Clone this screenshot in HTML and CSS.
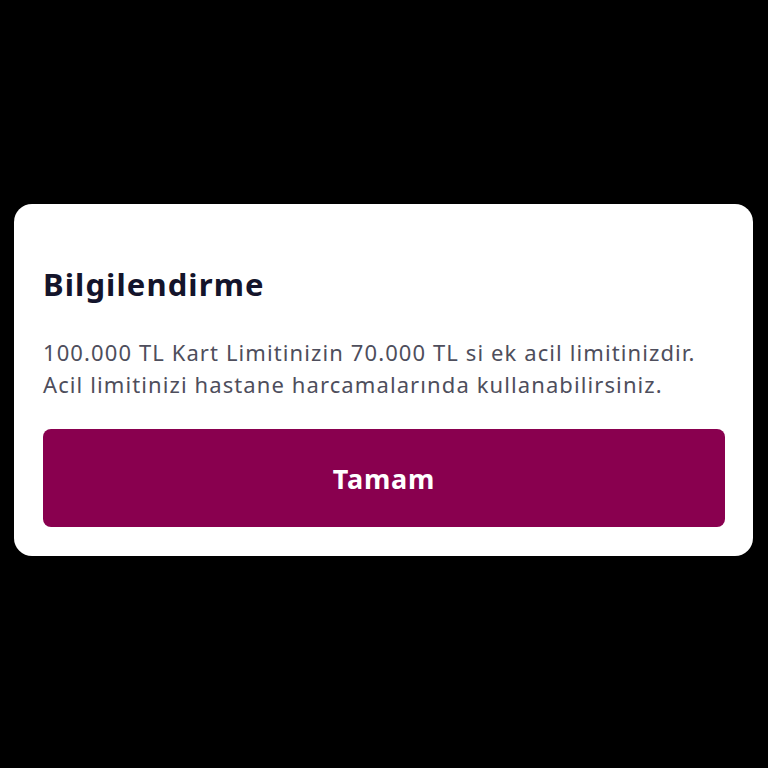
FILE: index.html
```html
<!DOCTYPE html>
<html lang="tr">
<head>
  <meta charset="UTF-8">
  <meta name="viewport" content="width=device-width,initial-scale=1">
  <title>Bilgilendirme</title>
  <link rel="stylesheet" href="styles.css">
</head>
<body>
  <!-- Bilgilendirme penceresi -->
  <div class="dialog">
    <h2>Bilgilendirme</h2>
    <p>100.000 TL Kart Limitinizin 70.000 TL si ek acil limitinizdir.<br>Acil limitinizi hastane harcamalarında kullanabilirsiniz.</p>
    <button class="ok-btn">Tamam</button>
  </div>
</body>
</html>
```
FILE: styles.css
```css
*{margin:0;padding:0;box-sizing:border-box;}
html,body{
  height:100%;
  background:#000;
  font-family:"Noto Sans",sans-serif;
}
body{
  display:flex; align-items:flex-start;
  padding:204px 15px 0 14px;
}
.dialog{
  width:100%;
  background:#fff; border-radius:18px;
  padding:60px 28px 29px 29px;
}
.dialog h2{
  font-size:31px; font-weight:700;
  color:#14142b; line-height:40px;
  letter-spacing:1.1px;
}
.dialog p{
  margin-top:32px;
  font-size:22px; line-height:32px;
  color:#4e4e5c; letter-spacing:1.1px;
}
.ok-btn{
  display:block; width:100%; height:98px;
  margin-top:29px;
  border:none; border-radius:8px;
  background:#89004f; color:#fff;
  font-family:inherit; font-size:27px; font-weight:700;
  letter-spacing:.8px;
}
```
